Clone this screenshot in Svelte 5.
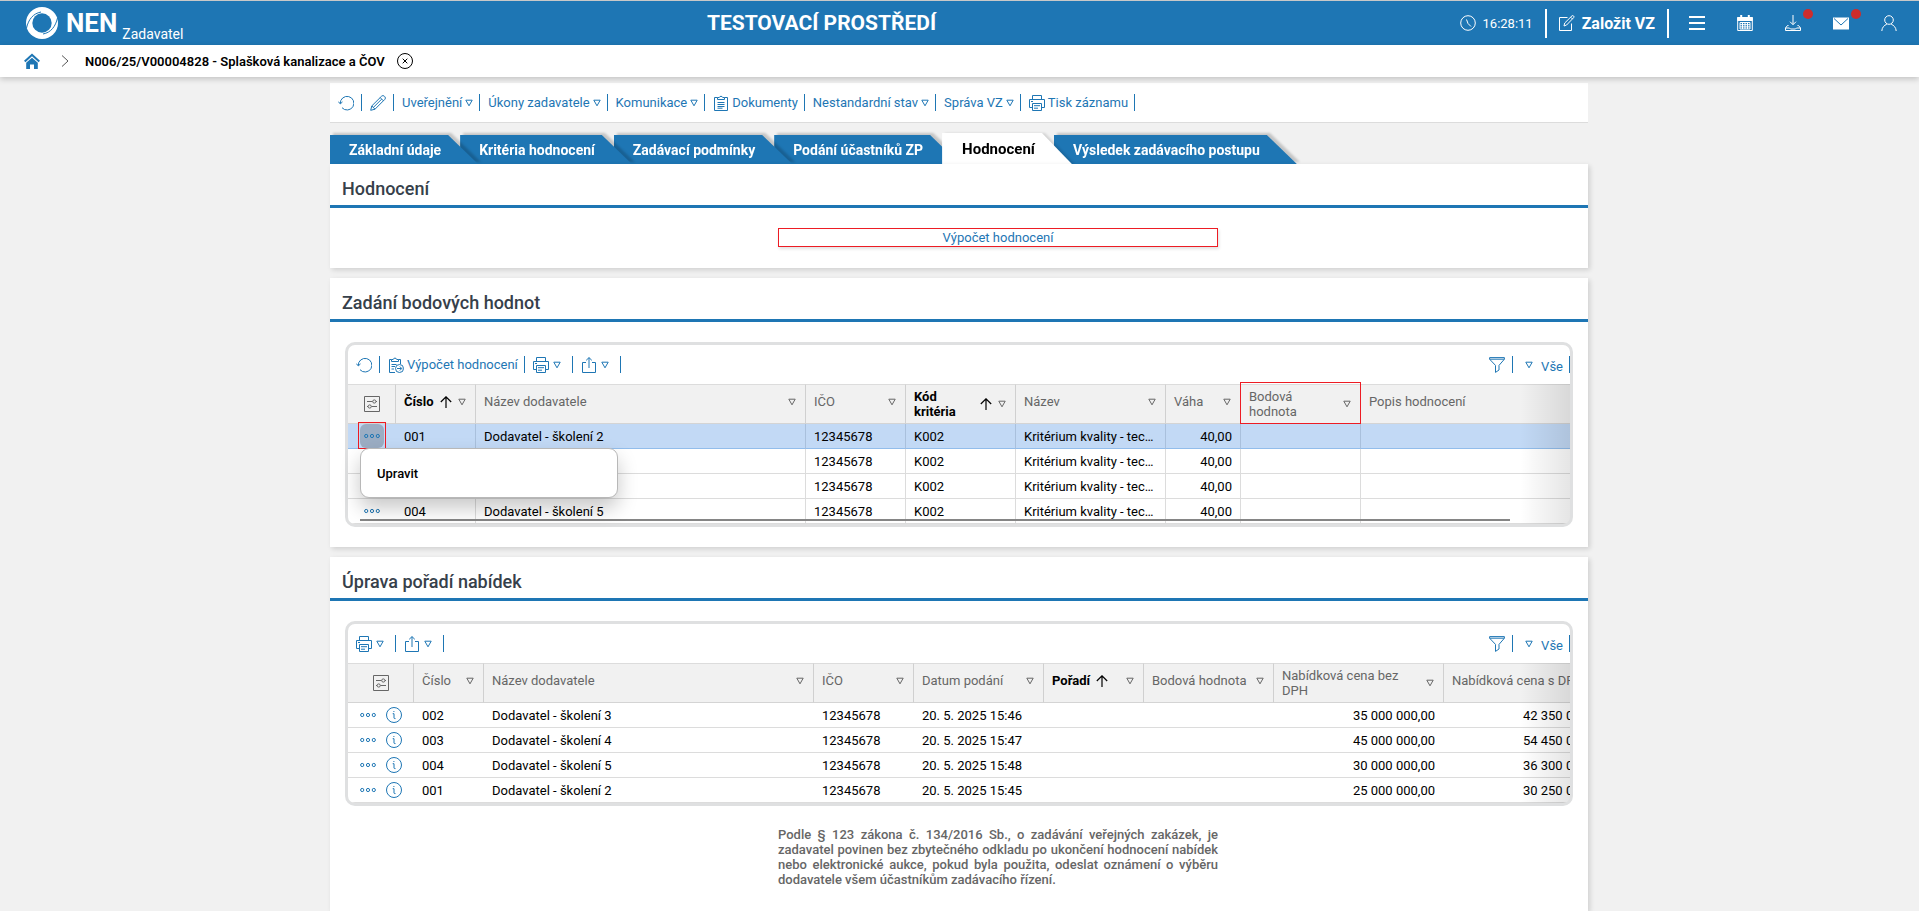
<script>
  const actions = [
    { icon: 'refresh', name: 'Obnovit' },
    { icon: 'pencil', name: 'Upravit záznam' },
    { label: 'Uveřejnění', menu: true },
    { label: 'Úkony zadavatele', menu: true },
    { label: 'Komunikace', menu: true },
    { icon: 'clipboard', label: 'Dokumenty' },
    { label: 'Nestandardní stav', menu: true },
    { label: 'Správa VZ', menu: true },
    { icon: 'printer', label: 'Tisk záznamu' }
  ];

  const tabs = [
    'Základní údaje',
    'Kritéria hodnocení',
    'Zadávací podmínky',
    'Podání účastníků ZP',
    'Hodnocení',
    'Výsledek zadávacího postupu'
  ];
  let activeTab = $state('Hodnocení');
  let menuOpen = $state(true);

  const scoreActions = [
    { icon: 'refresh', name: 'Obnovit' },
    { icon: 'compute', label: 'Výpočet hodnocení' },
    { icon: 'printer', name: 'Tisk', menu: true, wide: true },
    { icon: 'share', name: 'Export', menu: true, wide: true }
  ];
  const orderActions = scoreActions.slice(2);

  const scoreColumns = [
    { label: 'Číslo', width: 80, sorted: true },
    { label: 'Název dodavatele', width: 330 },
    { label: 'IČO', width: 100 },
    { label: 'Kód kritéria', width: 110, sorted: true, tall: true },
    { label: 'Název', width: 150 },
    { label: 'Váha', width: 75, number: true },
    { label: 'Bodová hodnota', width: 120, tall: true, marked: true },
    { label: 'Popis hodnocení', width: 330 }
  ];
  const scoreRows = ['001,2', '002,3', '003,4', '004,5'].map((entry) => {
    const [number, school] = entry.split(',');
    return [number, `Dodavatel - školení ${school}`, '12345678', 'K002', 'Kritérium kvality - tec…', '40,00', '', ''];
  });

  const orderColumns = [
    { label: 'Číslo', width: 70 },
    { label: 'Název dodavatele', width: 330 },
    { label: 'IČO', width: 100 },
    { label: 'Datum podání', width: 130 },
    { label: 'Pořadí', width: 100, sorted: true },
    { label: 'Bodová hodnota', width: 130 },
    { label: 'Nabídková cena bez DPH', width: 170, number: true, tall: true },
    { label: 'Nabídková cena s DPH', width: 170, number: true }
  ];
  const orderRows = [
    ['002', 'Dodavatel - školení 3', '12345678', '20. 5. 2025 15:46', '', '', '35 000 000,00', '42 350 000,00'],
    ['003', 'Dodavatel - školení 4', '12345678', '20. 5. 2025 15:47', '', '', '45 000 000,00', '54 450 000,00'],
    ['004', 'Dodavatel - školení 5', '12345678', '20. 5. 2025 15:48', '', '', '30 000 000,00', '36 300 000,00'],
    ['001', 'Dodavatel - školení 2', '12345678', '20. 5. 2025 15:45', '', '', '25 000 000,00', '30 250 000,00']
  ];
</script>

{#snippet icon(name)}
  <svg class="icon" viewBox="0 0 16 16" aria-hidden="true">
    {#if name === 'refresh'}
      <path d="M2.3 8.6A6.8 6.8 0 1 1 4 12.7" />
      <path d="M.3 6.6l2 2.3 2.2-2" />
    {:else if name === 'pencil'}
      <path d="M.7 15.3l1.1-4.4L11.6 1.2a1.9 1.9 0 0 1 2.7 0l.5.5a1.9 1.9 0 0 1 0 2.7L5 14.2z M1.8 10.9L5 14.2 M10.2 2.6l3.2 3.2 M3.4 12.4l8.2-8.2" />
    {:else if name === 'clipboard'}
      <path d="M4.5 2.5h-3v13h13v-13h-3 M4.5 4.5v-2h1.8a1.8 1.8 0 0 1 3.4 0h1.8v2z M4.5 7.5h7 M4.5 9.5h7 M4.5 11.5h7 M4.5 13.2h5" />
    {:else if name === 'compute'}
      <path d="M7 15.5H1.5v-13h2 M10.500 2.500h2V7 M3.500 4.500v-2h1.700a1.800 1.800 0 0 1 3.500 0h1.800v2z M3.500 7.500h5 M3.500 9.500h3.500 M3.500 12h2.500" />
      <circle cx="11.500" cy="11.500" r="4" />
      <path d="M9 11.500h4.600 M11.800 9.500l2 2-2 2" />
    {:else if name === 'printer'}
      <path d="M3.500 4.500v-4h9v4 M3.500 12.500h-3v-8h15v8h-3 M3.500 8.500h9v7h-9z M5 10.700h6 M5 13.200h4 M2 6.500h2" />
    {:else if name === 'share'}
      <path d="M5 5.500H1.500v10h13v-10H11 M8 11V.7 M5.200 3.300L8 .6l2.800 2.700" />
    {:else if name === 'filter'}
      <path d="M.6 .6h14.800v1.600L10 8.400V13l-3.500 2.400V8.400L.6 2.200z M.8 2.200h14.400" />
    {:else if name === 'settings'}
      <path d="M.5 .5h15v15H.5z M3 5.500h5.500 M12 5.500h1 M3 10.500h1 M7.500 10.500H13" />
      <circle cx="10.300" cy="5.500" r="1.600" />
      <circle cx="5.700" cy="10.500" r="1.600" />
    {:else if name === 'more'}
      <circle cx="2.200" cy="8" r="1.600" />
      <circle cx="8" cy="8" r="1.600" />
      <circle cx="13.800" cy="8" r="1.600" />
    {:else if name === 'info'}
      <circle cx="8" cy="8" r="7.500" />
      <path d="M6.700 6.700H8V11q0 .8 1.500.6" />
      <path d="M7.400 4.500h1" />
    {:else if name === 'clock'}
      <circle cx="8" cy="8" r="7.300" />
      <path d="M6.500 4.500L8 8.500l3 3" />
    {:else if name === 'edit'}
      <path d="M8.500 2.500h-8v13h12V8.500 M5 11l.7-3L13 .8q.8-.6 1.600.2t.1 1.600L7.600 10z M11.700 2.200l1.900 1.900" />
    {:else if name === 'menu'}
      <path d="M0 2h16 M0 8h16 M0 14h16" stroke-width="2" />
    {:else if name === 'calendar'}
      <path d="M.7 2.500h14.600v13H.7z" />
      <path d="M.7 2.500h14.600v3H.7z" fill="currentColor" />
      <path d="M4.200 0v3.500 M11.800 0v3.500" stroke-width="2" />
      <path d="M3 7.500h10v6.500H3z M5.500 7.500V14 M8 7.500V14 M10.500 7.500V14 M3 9.700h10 M3 11.900h10" />
    {:else if name === 'download'}
      <path d="M8 0v9.500 M5 6.700l3 3 3-3 M3.500 10.500h-1l-2 2.500v2.500h15V13l-2-2.500h-1 M.5 13h4l1 1h5l1-1h4" />
    {:else if name === 'mail'}
      <path d="M0 2.500h16v12H0z" fill="currentColor" stroke="none" />
      <path d="M1 3.500l7 6.500 7-6.500" stroke="#1e76b4" />
    {:else if name === 'user'}
      <circle cx="8" cy="5" r="4.300" />
      <path d="M.8 16c.2-3.600 2.400-5.700 5-6.800 M15.200 16c-.2-3.600-2.400-5.700-5-6.800" />
    {:else if name === 'home'}
      <path d="M0 7.800L8 .6l8 7.200-1.400 1.400L8 3.300 1.400 9.200z" fill="currentColor" stroke="none" />
      <path d="M2.200 9.800L8 4.700l5.800 5.100V16H10v-4.500H6V16H2.200z" fill="currentColor" stroke="none" />
    {:else if name === 'close'}
      <circle cx="8" cy="8" r="7.500" />
      <path d="M5.700 5.700l4.600 4.600 M10.300 5.700l-4.600 4.600" />
    {/if}
  </svg>
{/snippet}

{#snippet triangle()}
  <svg class="tri" viewBox="0 0 8 8" aria-hidden="true"><path d="M.8 1.200h6.400L4 6.800z" /></svg>
{/snippet}

{#snippet commands(items)}
  {#each items as item}
    <button class="cmd" class:wide={item.wide} class:labelled={item.label} aria-label={item.name}>
      {#if item.icon}{@render icon(item.icon)}{/if}
      {#if item.label}<span>{item.label}</span>{/if}
      {#if item.menu}{@render triangle()}{/if}
    </button>
  {/each}
{/snippet}

{#snippet gridBar(items)}
  <div class="gridbar">
    {@render commands(items)}
    <span class="fill"></span>
    <button class="cmd" aria-label="Filtr">{@render icon('filter')}</button>
    <button class="cmd view">{@render triangle()}<span>Vše</span></button>
  </div>
{/snippet}

{#snippet grid(columns, rows, lead, withInfo)}
  <div class="scroller">
    <table class:lined={!withInfo}>
      <colgroup>
        <col style="width: {lead}px" />
        {#each columns as column}<col style="width: {column.width}px" />{/each}
      </colgroup>
      <thead>
        <tr>
          <th class="lead"><button class="settings" aria-label="Nastavení sloupců">{@render icon('settings')}</button></th>
          {#each columns as column}
            <th class:sorted={column.sorted} class:marked={column.marked}>
              <div class="head" class:tall={column.tall}>
                <span>{column.label}</span>
                {#if column.sorted}
                  <svg class="arrow" viewBox="0 0 12 12" aria-hidden="true"><path d="M6 12V.8 M.8 6L6 .8 11.200 6" /></svg>
                {/if}
                {@render triangle()}
              </div>
            </th>
          {/each}
        </tr>
      </thead>
      <tbody>
        {#each rows as row, index}
          <tr class:selected={!withInfo && index === 0}>
            <td class="lead">
              <div class="tools" class:pair={withInfo}>
                <button
                  class="more"
                  class:open={!withInfo && index === 0}
                  aria-label="Akce řádku"
                  onclick={() => { if (!withInfo) menuOpen = !menuOpen; }}
                >{@render icon('more')}</button>
                {#if withInfo}<button class="info" aria-label="Detail">{@render icon('info')}</button>{/if}
              </div>
            </td>
            {#each row as cell, c}<td class:number={columns[c].number}>{cell}</td>{/each}
          </tr>
        {/each}
      </tbody>
    </table>
  </div>
{/snippet}

<div class="page">
  <header class="top">
    <a class="brand" href="#nen">
      <svg class="logo" viewBox="0 0 32 32" aria-hidden="true">
        <circle cx="16" cy="16" r="16" fill="#fff" />
        <circle cx="16" cy="16" r="9.700" fill="#1e76b4" />
        <path d="M.5 21C2.500 12.500 7 6.500 15 5 M31.500 11C29.500 19.500 25 25.500 17 27" fill="none" stroke="#1e76b4" stroke-width="1" />
      </svg>
      <span class="word">NEN</span>
      <span class="role">Zadavatel</span>
    </a>
    <div class="env">TESTOVACÍ PROSTŘEDÍ</div>
    <div class="clock">{@render icon('clock')}<time>16:28:11</time></div>
    <button class="create">{@render icon('edit')}<span>Založit VZ</span></button>
    <div class="quick">
      <button aria-label="Menu">{@render icon('menu')}</button>
      <button aria-label="Kalendář">{@render icon('calendar')}</button>
      <button class="badge" aria-label="Stažené soubory">{@render icon('download')}</button>
      <button class="badge" aria-label="Zprávy">{@render icon('mail')}</button>
      <button aria-label="Uživatel">{@render icon('user')}</button>
    </div>
  </header>

  <nav class="crumbs" aria-label="Drobečková navigace">
    <a class="home" href="#home" aria-label="Domů">{@render icon('home')}</a>
    <svg class="chevron" viewBox="0 0 8 12" aria-hidden="true"><path d="M1 .5L7 6l-6 5.500" /></svg>
    <a class="current" href="#record">N006/25/V00004828 - Splašková kanalizace a ČOV</a>
    <button class="close" aria-label="Zavřít">{@render icon('close')}</button>
  </nav>

  <main>
    <div class="toolbar">{@render commands(actions)}</div>

    <nav class="tabs" aria-label="Záložky">
      {#each tabs as tab, i}
        <button
          class="tab"
          class:active={tab === activeTab}
          style="z-index: {tab === activeTab ? 10 : tabs.length - i}"
          onclick={() => (activeTab = tab)}
        ><span>{tab}</span></button>
      {/each}
    </nav>

    <section class="panel first">
      <h2>Hodnocení</h2>
      <div class="field">
        <button class="calc">Výpočet hodnocení</button>
      </div>
    </section>

    <section class="panel">
      <h2>Zadání bodových hodnot</h2>
      <div class="gridbox">
        {@render gridBar(scoreActions)}
        {@render grid(scoreColumns, scoreRows, 48, false)}
        <div class="scrollbar"></div>
        {#if menuOpen}
          <div class="popup"><button>Upravit</button></div>
        {/if}
      </div>
    </section>

    <section class="panel last">
      <h2>Úprava pořadí nabídek</h2>
      <div class="gridbox">
        {@render gridBar(orderActions)}
        {@render grid(orderColumns, orderRows, 66, true)}
      </div>
      <div class="field">
        <p>Podle § 123 zákona č. 134/2016 Sb., o zadávání veřejných zakázek, je zadavatel povinen bez zbytečného odkladu po ukončení hodnocení nabídek nebo elektronické aukce, pokud byla použita, odeslat oznámení o výběru dodavatele všem účastníkům zadávacího řízení.</p>
      </div>
    </section>
  </main>
</div>

<style>
  :global(body) {
    margin: 0;
    background: #f1f1f1;
  }
  * {
    box-sizing: border-box;
  }
  .page {
    min-height: 100vh;
    display: flex;
    flex-direction: column;
    font-family: Roboto, 'Liberation Sans', sans-serif;
    font-size: 13px;
    line-height: 15px;
    color: #000;
  }
  button {
    margin: 0;
    padding: 0;
    border: 0;
    background: none;
    font: inherit;
    color: inherit;
    cursor: pointer;
  }
  a {
    color: inherit;
    text-decoration: none;
  }
  .icon {
    display: block;
    flex: none;
    width: 16px;
    height: 16px;
    fill: none;
    stroke: currentColor;
  }
  .tri {
    flex: none;
    width: 8px;
    height: 8px;
    fill: none;
    stroke: currentColor;
  }

  .top {
    display: flex;
    align-items: center;
    height: 45px;
    padding-right: 22px;
    border-top: 1px solid #c8c8c8;
    background: #1e76b4;
    color: #fff;
  }
  .brand {
    display: flex;
    align-items: center;
    padding-left: 26px;
  }
  .logo {
    width: 32px;
    height: 32px;
  }
  .word {
    margin-left: 8px;
    font-size: 26px;
    line-height: 32px;
    font-weight: 700;
  }
  .role {
    align-self: flex-end;
    margin-left: 5px;
    padding-top: 22px;
    font-size: 14px;
    line-height: 16px;
  }
  .env {
    flex: 1;
    text-align: center;
    font-size: 21px;
    line-height: 24px;
    font-weight: 700;
  }
  .clock {
    display: flex;
    align-items: center;
    gap: 7px;
    padding-right: 12px;
  }
  .create {
    display: flex;
    align-items: center;
    gap: 7px;
    height: 29px;
    padding: 0 12px;
    border-left: 2px solid #fff;
    border-right: 2px solid #fff;
    font-size: 16px;
    font-weight: 700;
  }
  .quick {
    display: flex;
    gap: 32px;
    padding-left: 20px;
  }
  .quick button {
    position: relative;
  }
  .badge::after {
    content: '';
    position: absolute;
    top: -6px;
    right: -12px;
    width: 10px;
    height: 10px;
    border-radius: 50%;
    background: #cd2c2c;
  }

  .crumbs {
    position: relative;
    z-index: 20;
    display: flex;
    align-items: center;
    height: 32px;
    padding-left: 24px;
    background: #fff;
    box-shadow: 0 2px 6px rgba(0, 0, 0, 0.2);
  }
  .home {
    color: #1e76b4;
  }
  .chevron {
    width: 8px;
    height: 12px;
    margin: 0 16px 0 21px;
    fill: none;
    stroke: #555;
  }
  .current {
    font-weight: 600;
  }
  .close {
    margin-left: 12px;
  }

  main {
    flex: 1;
    display: flex;
    flex-direction: column;
    width: 100%;
    max-width: 1259px;
    margin: 0 auto;
    padding: 6px 1px 0 0;
  }
  .toolbar {
    display: flex;
    align-items: center;
    height: 40px;
    border-bottom: 1px solid #dcdcdc;
    background: #fff;
  }
  .cmd {
    display: flex;
    flex: none;
    align-items: center;
    gap: 4px;
    height: 17px;
    padding: 0 7px 0 8px;
    border-right: 1px solid #1e76b4;
    color: #1e76b4;
    white-space: nowrap;
  }
  .cmd.labelled {
    gap: 3px;
    padding-right: 6px;
  }
  .cmd.wide {
    padding-right: 11px;
  }
  .cmd.view {
    gap: 8px;
    padding-left: 12px;
    padding-right: 6px;
  }
  .cmd.view span {
    padding-top: 4px;
  }

  .tabs {
    display: flex;
    align-items: flex-end;
    height: 41px;
  }
  .tab {
    position: relative;
    height: 29px;
    margin-right: -18px;
    padding: 1px 37px 0 19px;
    color: #fff;
    font-size: 14px;
    font-weight: 700;
    filter: drop-shadow(3px -2px 1px rgba(0, 0, 0, 0.18));
  }
  .tab::before {
    content: '';
    position: absolute;
    inset: 0;
    background: #1e76b4;
    clip-path: polygon(0 0, calc(100% - 30px) 0, 100% 100%, 0 100%);
  }
  .tab span {
    position: relative;
    white-space: nowrap;
  }
  .tab.active {
    height: 31px;
    padding-left: 20px;
    color: #000;
    font-size: 15px;
    filter: drop-shadow(3px 0 1px rgba(0, 0, 0, 0.12));
  }
  .tab.active::before {
    background: #fff;
  }

  .panel {
    position: relative;
    z-index: 11;
    margin-bottom: 10px;
    padding-bottom: 20px;
    background: #fff;
    box-shadow: 2px 2px 5px rgba(0, 0, 0, 0.14);
  }
  .panel.last {
    flex: 1;
    margin-bottom: 0;
  }
  .panel.first {
    padding-bottom: 21px;
  }
  h2 {
    height: 44px;
    margin: 0 0 20px;
    padding: 14px 12px 0;
    border-bottom: 3px solid #1e76b4;
    color: #36404a;
    font-size: 18px;
    line-height: 22px;
    font-weight: 500;
  }
  .field {
    display: grid;
    grid-template-columns: 448fr 440fr 370fr;
  }
  .field > * {
    grid-column: 2;
  }
  .calc {
    height: 19px;
    border: 1px solid #ed1c24;
    color: #1e76b4;
    box-shadow: 1px 2px 3px rgba(0, 0, 0, 0.12);
  }
  p {
    margin: 21px 0 0;
    color: #666;
    font-weight: 500;
    text-align: justify;
  }

  .gridbox {
    position: relative;
    margin: 0 15px;
    border: 3px solid #dfe0e1;
    border-radius: 10px;
  }
  .gridbar {
    display: flex;
    align-items: center;
    height: 39px;
  }
  .fill {
    flex: 1;
  }
  .scroller {
    position: relative;
    overflow-x: clip;
    clip-path: inset(-4px 0 0 0 round 0 0 7px 7px);
  }
  .scroller::after {
    content: '';
    position: absolute;
    inset: 0 0 0 auto;
    width: 50px;
    background: linear-gradient(to right, rgba(0, 0, 0, 0), rgba(0, 0, 0, 0.1));
    pointer-events: none;
  }
  table {
    width: max-content;
    table-layout: fixed;
    border-collapse: separate;
    border-spacing: 0;
  }
  th {
    position: relative;
    height: 40px;
    padding: 0 9px 0 8px;
    border-top: 1px solid #dcdcdc;
    border-bottom: 1px solid #d4d4d4;
    border-right: 1px solid #d0d0d0;
    background: #f1f1f1;
    color: #666;
    font-weight: 400;
    text-align: left;
  }
  .head {
    display: flex;
    align-items: center;
    gap: 6px;
    padding-bottom: 5px;
  }
  .head.tall {
    padding-bottom: 0;
  }
  .head .tri {
    margin-left: auto;
  }
  .sorted span {
    color: #000;
    font-weight: 700;
  }
  .arrow {
    flex: none;
    width: 12px;
    height: 12px;
    fill: none;
    stroke: #000;
    stroke-width: 1.2;
  }
  .marked {
    z-index: 1;
  }
  .marked::after {
    content: '';
    position: absolute;
    inset: -3px -1px -1px -1px;
    border: 1px solid #ed1c24;
  }
  td {
    height: 25px;
    padding: 1px 9px 0 8px;
    border-bottom: 1px solid #dcdcdc;
    white-space: nowrap;
  }
  .lined td {
    padding-right: 8px;
    border-right: 1px solid #dcdcdc;
  }
  .number {
    text-align: right;
  }
  .selected td {
    background: #c2d9f5;
    border-bottom-color: #92bdeb;
    border-right-color: #a9c0dc;
  }
  .lead,
  .lined td.lead {
    padding: 0;
  }
  .lined td.lead {
    border-right: 0;
  }
  .settings {
    display: block;
    margin: 0 auto;
  }
  .tools {
    display: flex;
    align-items: center;
    justify-content: center;
    height: 24px;
    color: #1e76b4;
  }
  .tools.pair {
    justify-content: flex-start;
    padding-left: 8px;
  }
  .more {
    position: relative;
    padding: 4px;
    border-radius: 6px;
  }
  .more.open {
    background: #9badc3;
  }
  .more.open::after {
    content: '';
    position: absolute;
    inset: -2px -2px -1px;
    border: 1px solid #ed1c24;
  }
  .info {
    margin-left: 6px;
  }
  .scrollbar {
    position: absolute;
    left: 12px;
    right: 60px;
    bottom: 3px;
    height: 2px;
    background: #858585;
  }
  .popup {
    position: absolute;
    z-index: 2;
    top: 103px;
    left: 12px;
    width: 258px;
    height: 50px;
    border: 1px solid #b8b8b8;
    border-radius: 9px;
    background: #fff;
    box-shadow: 0 10px 20px rgba(0, 0, 0, 0.22);
  }
  .popup button {
    width: 100%;
    height: 100%;
    padding: 0 16px;
    font-weight: 500;
    text-align: left;
  }
</style>
